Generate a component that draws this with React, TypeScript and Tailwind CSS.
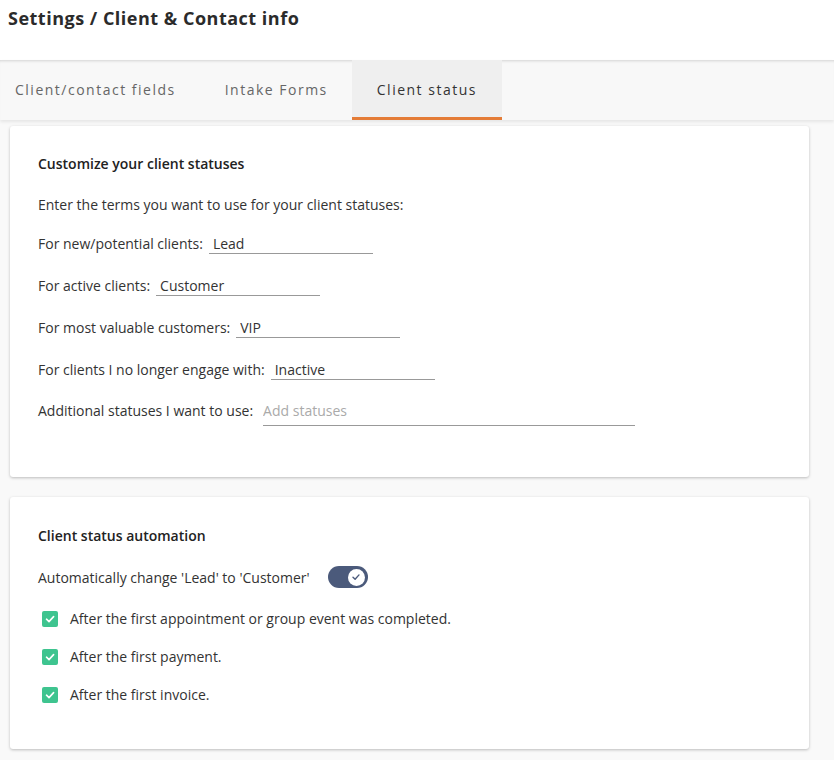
import { useState } from 'react';

const tabs = ['Client/contact fields', 'Intake Forms', 'Client status'];

const statusFields = [
  { label: 'For new/potential clients:', value: 'Lead' },
  { label: 'For active clients:', value: 'Customer' },
  { label: 'For most valuable customers:', value: 'VIP' },
  { label: 'For clients I no longer engage with:', value: 'Inactive' },
];

const triggers = [
  'After the first appointment or group event was completed.',
  'After the first payment.',
  'After the first invoice.',
];

function Toggle({ on, onChange }: { on: boolean; onChange: (v: boolean) => void }) {
  return (
    <button
      type="button"
      onClick={() => onChange(!on)}
      className={`flex h-[22px] w-[40px] items-center rounded-full px-[3px] ${on ? 'justify-end bg-[#4b5a7b]' : 'justify-start bg-[#c8ccd4]'}`}
    >
      <span className="flex h-[17px] w-[17px] items-center justify-center rounded-full bg-white">
        {on && (
          <svg width="10" height="10" viewBox="0 0 10 10" fill="none">
            <path d="M2 5.2 4.1 7.2 8 2.9" stroke="#4b5a7b" strokeWidth="1.4" strokeLinecap="round" strokeLinejoin="round" />
          </svg>
        )}
      </span>
    </button>
  );
}

function Check({ checked, onChange }: { checked: boolean; onChange: (v: boolean) => void }) {
  return (
    <button
      type="button"
      onClick={() => onChange(!checked)}
      className={`flex h-[16px] w-[16px] items-center justify-center rounded-[2px] ${checked ? 'bg-[#3ec48f]' : 'border border-[#999] bg-white'}`}
    >
      {checked && (
        <svg width="12" height="12" viewBox="0 0 12 12" fill="none">
          <path d="M2.5 6.2 5 8.6 9.6 3.6" stroke="white" strokeWidth="1.6" strokeLinecap="round" strokeLinejoin="round" />
        </svg>
      )}
    </button>
  );
}

export default function App() {
  const [auto, setAuto] = useState(true);
  const [checks, setChecks] = useState([true, true, true]);

  return (
    <div className="min-h-[760px] bg-[#f9f9f9] font-['Open_Sans',sans-serif] text-[#333]">
      {/* page header */}
      <div className="h-[60px] bg-white px-[8px] pt-[5px]">
        <h1 className="font-['Open_Sans',sans-serif] text-[18px] font-bold tracking-[0.5px] text-[#2b2b2b]">
          Settings / Client &amp; Contact info
        </h1>
      </div>

      {/* tab bar */}
      <div className="flex h-[60px] bg-[#f8f8f8] shadow-[inset_0_3px_3px_-2px_rgba(0,0,0,0.15),0_2px_3px_rgba(0,0,0,0.08)]">
        {tabs.map((t, i) => {
          const active = i === 2;
          return (
            <div
              key={t}
              className={`flex items-center border-b-[3px] text-[14px] tracking-[1.5px] ${
                active
                  ? 'border-[#e47c37] bg-[#efefef] pl-[25px] pr-[25px] text-[#333]'
                  : 'border-transparent text-[#666]'
              } ${i === 0 ? 'pl-[15px] pr-[25px]' : ''} ${i === 1 ? 'pl-[24px] pr-[24px]' : ''}`}
            >
              <span className="pt-[1px]">{t}</span>
            </div>
          );
        })}
      </div>

      <div className="flex flex-col gap-[20px] px-[10px] pt-[6px] pb-[12px] pr-[25px]">
        {/* statuses card */}
        <section className="h-[351px] rounded-[3px] bg-white px-[28px] pt-[27px] shadow-[0_1px_3px_rgba(0,0,0,0.25)]">
          <h2 className="text-[14px] font-semibold text-[#222]">Customize your client statuses</h2>
          <p className="mt-[20px] text-[14px]">Enter the terms you want to use for your client statuses:</p>
          <div className="mt-[18px] flex flex-col gap-[21px]">
            {statusFields.map((f) => (
              <div key={f.label} className="flex items-end gap-[6px] text-[14px]">
                <span>{f.label}</span>
                <input
                  defaultValue={f.value}
                  className="h-[20px] w-[164px] border-b border-[#999] px-[4px] text-[14px] text-[#333] outline-none"
                />
              </div>
            ))}
            <div className="-mt-[1px] flex items-end gap-[10px] text-[14px]">
              <span className="pb-[5px]">Additional statuses I want to use:</span>
              <input
                placeholder="Add statuses"
                className="h-[25px] w-[372px] border-b border-[#999] pb-[5px] text-[14px] text-[#333] outline-none placeholder:text-[#aaa]"
              />
            </div>
          </div>
        </section>

        {/* automation card */}
        <section className="h-[252px] rounded-[3px] bg-white px-[28px] pt-[28px] shadow-[0_1px_3px_rgba(0,0,0,0.25)]">
          <h2 className="text-[14px] font-semibold text-[#222]">Client status automation</h2>
          <div className="mt-[20px] flex items-center gap-[18px] text-[14px]">
            <span>Automatically change 'Lead' to 'Customer'</span>
            <Toggle on={auto} onChange={setAuto} />
          </div>
          <div className="mt-[20px] flex flex-col gap-[17px] pl-[4px]">
            {triggers.map((t, i) => (
              <label key={t} className="flex items-center gap-[12px] text-[14px]">
                <Check
                  checked={checks[i]}
                  onChange={(v) => setChecks((c) => c.map((x, j) => (j === i ? v : x)))}
                />
                <span>{t}</span>
              </label>
            ))}
          </div>
        </section>
      </div>
    </div>
  );
}
